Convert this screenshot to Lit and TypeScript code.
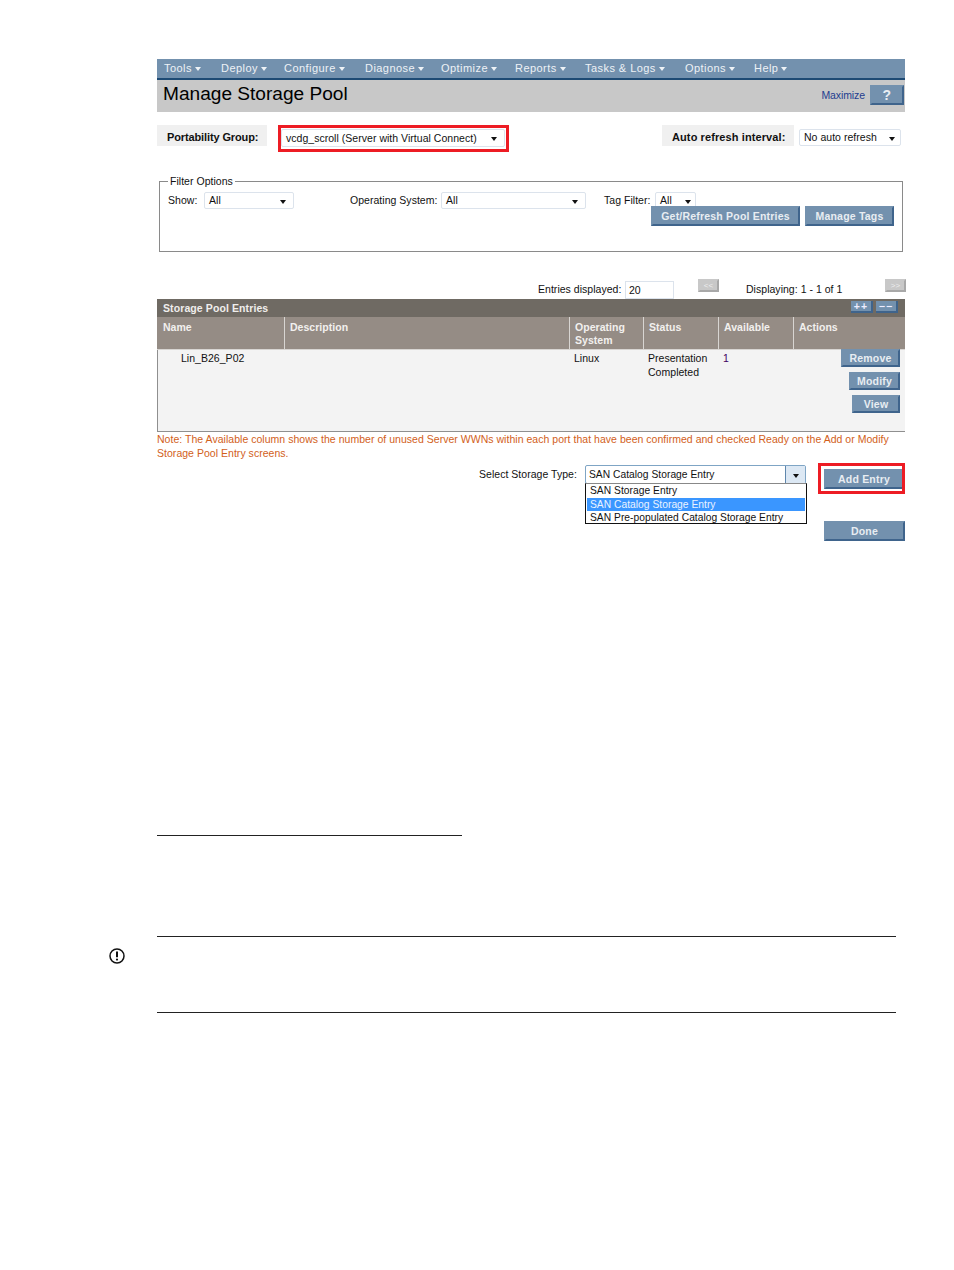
import { LitElement, html, css } from "lit";
import { customElement } from "lit/decorators.js";

const MENU: [string, number][] = [["Tools", 57], ["Deploy", 63], ["Configure", 81], ["Diagnose", 76], ["Optimize", 74], ["Reports", 70], ["Tasks & Logs", 100], ["Options", 69], ["Help", 60]];

@customElement("app-root")
export class AppRoot extends LitElement {
  static styles = css`
    :host { display: block; width: 954px; height: 1270px; position: relative; background: #fff; color: #111;
      font: 10.5px/13px "Liberation Sans", Arial, sans-serif; letter-spacing: .03px; overflow: hidden; }
    * { box-sizing: border-box; }
    .page { padding: 59px 49px 0 157px; }
    .menu { display: flex; height: 21px; padding-left: 7px; align-items: center; background: #7391ae;
      border-bottom: 2px solid #1d4a74; color: #eef2f6; font-size: 11px; letter-spacing: .45px; }
    .menu span { display: flex; align-items: center; gap: 3px; flex: none; }
    .menu i, .drop { width: 0; height: 0; border: 3.5px solid transparent; border-top: 4px solid #eef2f6; border-bottom: 0; display: block; margin-top: 1px; }
    .drop { border-top-color: #111; margin-top: 2px; }
    .title { height: 32px; background: #c8c8c8; display: flex; padding: 0 1px 0 6px; justify-content: space-between; }
    .title h1 { margin: 1px 0 0; font-size: 19.1px; font-weight: 400; letter-spacing: 0; line-height: 26px; color: #000; }
    .title div { display: flex; align-items: center; gap: 5px; color: #1f3d8f; margin-top: 5px; height: 20px; letter-spacing: -.1px; }
    .btn { display: inline-flex; align-items: center; justify-content: center; background: #7391ae; color: #e8edf2;
      font-weight: 700; font-size: 10.5px; letter-spacing: .2px; border: 2px solid #7391ae; border-right-color: #3f648c; border-bottom-color: #3f648c; white-space: nowrap; }
    .help { width: 34px; height: 20px; font-size: 14px; }
    .pg { display: flex; margin-top: 13px; height: 27px; align-items: flex-start; }
    .lab { background: #f0f0f0; height: 21px; font-weight: 700; display: flex; align-items: center; color: #111; font-size: 11px; letter-spacing: .1px; padding-top: 3px; white-space: nowrap; }
    .lab1 { width: 110px; padding-left: 10px; margin-right: 11px; letter-spacing: -.12px; }
    .redbox { border: 3px solid #ed1c24; width: 231px; height: 27px; padding: 1px 0 0 0; }
    .sel { display: flex; align-items: center; justify-content: space-between; border: 1px solid #dce3ec; border-radius: 2px; background: #fff; flex: none; white-space: nowrap; }
    .s1 { height: 18px; width: 224px; padding: 0 7px 0 4px; margin-left: 0; }
    .s2 { width: 102px; height: 17px; padding: 0 5px 0 4px; margin: 4px 4px 0 0; }
    .lab2 { width: 132px; margin-left: auto; margin-right: 5px; padding-left: 10px; }
    fieldset { margin: 24px 2px 0; border: 1px solid #8a8a8a; height: 76px; padding: 0 0 0 8px; width: 744px; display: block; min-width: 0; }
    legend { padding: 0 2px; margin-left: 0; line-height: 11px; }
    .filters { display: flex; align-items: center; height: 17px; margin-top: 5px; white-space: nowrap; }
    .filters b { font-weight: 400; flex: none; }
    .show { width: 31px; } .os { width: 85px; margin-left: 56px; } .tag { width: 45px; }
    .f1 { width: 90px; height: 17px; margin-left: 5px; padding: 0 7px 0 4px; }
    .f2 { width: 145px; height: 17px; margin: 0 18px 0 6px; padding: 0 7px 0 4px; }
    .f3 { width: 41px; height: 17px; margin-left: 6px; padding: 0 4px 0 4px; }
    .acts { display: flex; justify-content: flex-end; gap: 5px; margin: -3px 8px 0 0; position: relative; }
    .acts .btn { height: 20px; }
    .get { width: 149px; } .tags { width: 89px; }
    .entries { display: flex; align-items: center; height: 19px; margin-top: 28px; padding-left: 381px; white-space: nowrap; }
    .entries span { flex: none; }
    .ent { width: 82px; }
    .entries .num { width: 49px; height: 18px; border: 1px solid #dce3ec; margin: 0 24px 0 5px; padding: 2px 3px; flex: none; }
    .mini { width: 21px; height: 13px; flex: none; background: #c8c8c8; border: 2px solid #c8c8c8; border-right-color: #a8a8a8; border-bottom-color: #a8a8a8; color: #eee; font-size: 8px; line-height: 9px; text-align: center; align-self: flex-start; letter-spacing: 0; margin-top: -1px; }
    .disp { width: 95px; margin: 0 44px 0 27px; }
    .head { background: #6f6a63; height: 18px; display: flex; justify-content: space-between; align-items: center; padding: 0 7px 0 6px; color: #f0eeec; font-weight: 700; letter-spacing: .1px; font-size: 10.5px; }
    .head div { display: flex; gap: 3px; margin-top: -3px; }
    .pm { background: #7391ae; width: 22px; height: 12px; border-right: 2px solid #3f648c; border-bottom: 2px solid #3f648c; color: #eef; line-height: 10px; text-align: center; font-weight: 700; letter-spacing: 1px; }
    .grid { display: grid; grid-template-columns: 127px 285px 74px 75px 75px 112px; }
    .hcell { background: #958c85; height: 33px; padding: 4px 5px 0; border-left: 1px solid #d8d5d2; border-bottom: 1px solid #d8d5d2; color: #f2f0ee; font-weight: 700; line-height: 13px; }
    .hcell.first { border-left: 0; padding-left: 6px; }
    .body { background: #f3f3f3; height: 82px; padding: 1px 5px; border-bottom: 1px solid #8f8f8f; line-height: 14px; }
    .body.first { border-left: 1px solid #8f8f8f; padding-left: 23px; }
    .one { color: #400060; }
    .body.x { padding: 0 5px 0 0; display: flex; flex-direction: column; align-items: flex-end; gap: 5px; }
    .body.x .btn { height: 18px; flex: none; }
    .rem { width: 59px; margin-top: -1px; } .mod { width: 51px; } .view { width: 48px; }
    .note { color: #d2601a; margin: 0; line-height: 14px; width: 748px; }
    .add { display: flex; margin-top: 3px; height: 32px; align-items: flex-start; white-space: nowrap; }
    .add .t { margin: 5px 9px 0 322px; width: 97px; flex: none; }
    .combo { position: relative; flex: none; width: 221px; height: 19px; margin-top: 2px; border: 1px solid #7fa5c5; border-radius: 2px; display: flex; align-items: center; padding-left: 3px; justify-content: space-between; font-size: 10.25px; }
    .combo > u { text-decoration: none; }
    .arrow { width: 20px; height: 17px; background: #dce8f4; border-left: 1px solid #5f87ad; display: flex; align-items: center; justify-content: center; }
    .list { position: absolute; left: -1px; top: 17px; width: 222px; border: 1px solid #111; border-top-color: #888; background: #fff; z-index: 2; padding: 0 1px; height: 41px; }
    .list div { height: 13.5px; padding-left: 3px; line-height: 13px; }
    .list .on { background: #3a96ff; color: #eaf3ff; }
    .addbox { border: 3px solid #ed1c24; width: 87px; height: 31px; margin-left: 12px; padding: 3px 0 0 3px; overflow: hidden; flex: none; }
    .addbox .btn { width: 80px; height: 20px; }
    .done { margin: 26px 0 0 667px; width: 81px; height: 20px; display: flex; }
    .done .btn { width: 81px; }
    .rule1 { width: 305px; height: 1px; background: #222; margin-top: 294px; }
    .rule2 { width: 739px; height: 1px; background: #222; margin-top: 100px; }
    .rule3 { width: 739px; height: 1px; background: #222; margin-top: 75px; }
    .warn { position: absolute; left: 109px; top: 948px; width: 16px; height: 16px; }
  `;

  render() {
    return html`<div class="page">
      <nav class="menu">${MENU.map(([m, w]) => html`<span style="width:${w}px">${m}<i></i></span>`)}</nav>
      <div class="title"><h1>Manage Storage Pool</h1><div>Maximize <span class="btn help">?</span></div></div>
      <div class="pg">
        <div class="lab lab1">Portability Group:</div>
        <div class="redbox"><div class="sel s1">vcdg_scroll (Server with Virtual Connect)<span class="drop"></span></div></div>
        <div class="lab lab2">Auto refresh interval:</div>
        <div class="sel s2">No auto refresh<span class="drop"></span></div>
      </div>
      <fieldset>
        <legend>Filter Options</legend>
        <div class="filters">
          <b class="show">Show:</b><div class="sel f1">All<span class="drop"></span></div>
          <b class="os">Operating System:</b><div class="sel f2">All<span class="drop"></span></div>
          <b class="tag">Tag Filter:</b><div class="sel f3">All<span class="drop"></span></div>
        </div>
        <div class="acts"><span class="btn get">Get/Refresh Pool Entries</span><span class="btn tags">Manage Tags</span></div>
      </fieldset>
      <div class="entries">
        <span class="ent">Entries displayed:</span><div class="num">20</div>
        <div class="mini">&lt;&lt;</div><span class="disp">Displaying: 1 - 1 of 1</span><div class="mini">&gt;&gt;</div>
      </div>
      <div class="head">Storage Pool Entries<div><span class="pm">++</span><span class="pm">−−</span></div></div>
      <div class="grid">
        <div class="hcell first">Name</div><div class="hcell">Description</div><div class="hcell">Operating System</div>
        <div class="hcell">Status</div><div class="hcell">Available</div><div class="hcell">Actions</div>
        <div class="body first">Lin_B26_P02</div><div class="body"></div><div class="body">Linux</div>
        <div class="body">Presentation Completed</div><div class="body one">1</div>
        <div class="body x"><span class="btn rem">Remove</span><span class="btn mod">Modify</span><span class="btn view">View</span></div>
      </div>
      <p class="note">Note: The Available column shows the number of unused Server WWNs within each port that have been confirmed and checked Ready on the Add or Modify Storage Pool Entry screens.</p>
      <div class="add">
        <span class="t">Select Storage Type:</span>
        <div class="combo"><u>SAN Catalog Storage Entry</u><span class="arrow"><span class="drop"></span></span>
          <div class="list"><div>SAN Storage Entry</div><div class="on">SAN Catalog Storage Entry</div><div>SAN Pre-populated Catalog Storage Entry</div></div>
        </div>
        <div class="addbox"><span class="btn">Add Entry</span></div>
      </div>
      <div class="done"><span class="btn">Done</span></div>
      <div class="rule1"></div>
      <div class="rule2"></div>
      <div class="rule3"></div>
    </div>
    <svg class="warn" viewBox="0 0 16 16" fill="none" stroke="#111"><circle cx="8" cy="8" r="7" stroke-width="1.5"/><path d="M8 3.6v5.6" stroke-width="2"/><circle cx="8" cy="11.6" r="1.1" fill="#111" stroke="none"/></svg>`;
  }
}
